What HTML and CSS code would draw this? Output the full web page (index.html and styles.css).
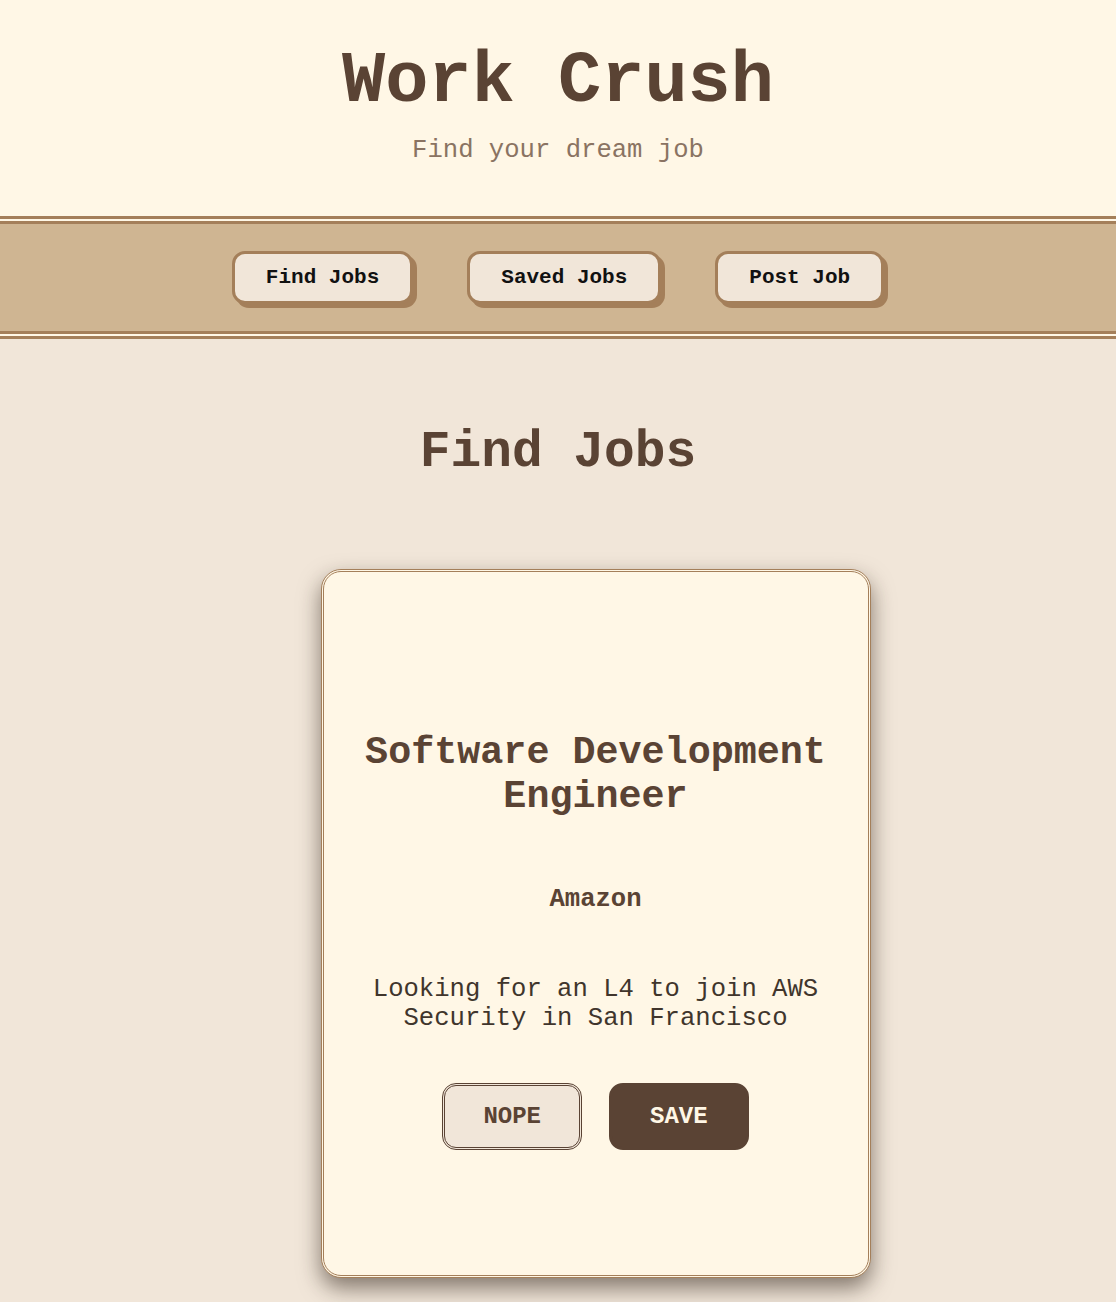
FILE: index.html
```html
<!DOCTYPE html>
<html lang="en">
<head>
<meta charset="utf-8">
<title>Work Crush</title>
<link rel="stylesheet" href="styles.css">
</head>
<body>
<header class="site-header">
  <h1 class="site-title">Work Crush</h1>
  <p class="site-tagline">Find your dream job</p>
</header>
<nav class="site-nav">
  <button class="nav-btn">Find Jobs</button>
  <button class="nav-btn">Saved Jobs</button>
  <button class="nav-btn">Post Job</button>
</nav>
<main class="main">
  <h2 class="page-title">Find Jobs</h2>
  <div class="card-area">
    <div class="job-card">
      <h3 class="job-title">Software Development Engineer</h3>
      <p class="job-company">Amazon</p>
      <p class="job-desc">Looking for an L4 to join AWS Security in San Francisco</p>
      <div class="job-actions">
        <button class="btn btn-nope">NOPE</button>
        <button class="btn btn-save">SAVE</button>
      </div>
    </div>
  </div>
</main>
</body>
</html>
```

FILE: styles.css
```css
* { box-sizing: border-box; }

body {
  margin: 0;
  background: #fff7e6;
  font-family: "Courier New", Courier, "Nimbus Mono PS", "Nimbus Mono L", FreeMono, "Liberation Mono", monospace;
  color: #5a4334;
}

.site-header {
  text-align: center;
  padding: 41px 0 51px;
  background: #fff7e6;
}

.site-title {
  margin: 0;
  font-size: 72px;
  font-weight: bold;
  line-height: normal;
  color: #5a4334;
}

.site-tagline {
  margin: 13px 0 0;
  font-size: 25.6px;
  line-height: normal;
  color: #8a7362;
}

.site-nav {
  display: flex;
  justify-content: center;
  gap: 54px;
  padding: 27px 0;
  background: #cfb592;
  background-clip: padding-box;
  border-top: 8px double #a47f5a;
  border-bottom: 8px double #a47f5a;
}

.nav-btn {
  font-family: inherit;
  font-size: 21px;
  font-weight: bold;
  line-height: normal;
  color: #111;
  background: #f1e6d9;
  border: 3px solid #a47f5a;
  border-radius: 13px;
  padding: 12px 31px;
  box-shadow: 4px 4px 0 #a47f5a;
  cursor: pointer;
}

.main {
  background: #f1e6d9;
  padding: 84px 0 60px;
}

.page-title {
  margin: 0;
  text-align: center;
  font-size: 51.2px;
  font-weight: bold;
  line-height: normal;
  color: #5a4334;
}

.card-area {
  display: flex;
  justify-content: center;
  padding-left: 75px;
  margin-top: 88px;
}

.job-card {
  width: 550px;
  background: #fff7e6;
  border: 3px double #a47f5a;
  border-radius: 20px;
  padding: 159px 40px 125px;
  text-align: center;
  box-shadow: 0 10px 22px rgba(40, 28, 18, 0.55);
}

.job-title {
  margin: 0;
  font-size: 38.4px;
  font-weight: bold;
  line-height: normal;
  color: #5a4334;
}

.job-company {
  margin: 66px 0 0;
  font-size: 25.6px;
  font-weight: bold;
  line-height: normal;
  color: #5a4334;
}

.job-desc {
  margin: 61px 0 0;
  font-size: 25.6px;
  line-height: normal;
  color: #40352c;
}

.job-actions {
  margin-top: 50px;
  display: flex;
  justify-content: center;
  gap: 27px;
}

.btn {
  font-family: inherit;
  font-size: 24px;
  font-weight: bold;
  line-height: normal;
  padding: 17px 38px;
  border-radius: 14px;
  cursor: pointer;
}

.btn-nope {
  background: #f1e6d9;
  color: #5a4334;
  border: 3px double #5a4334;
}

.btn-save {
  background: #5a4334;
  color: #fff7e6;
  border: 3px solid #5a4334;
}
```
